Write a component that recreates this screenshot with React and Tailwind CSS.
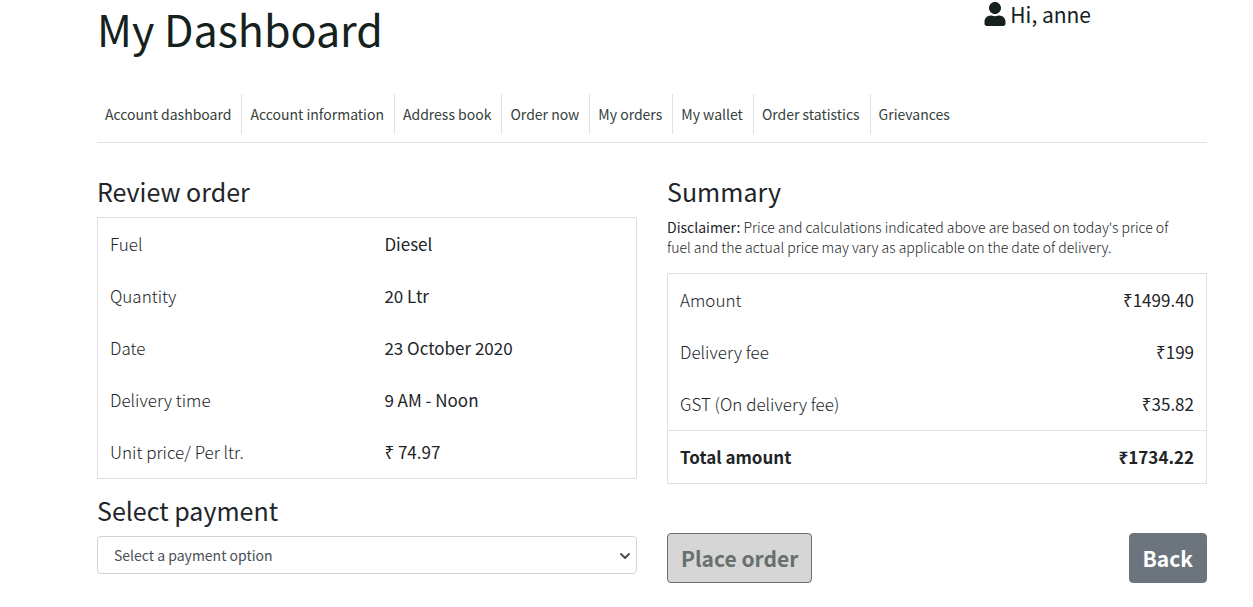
import { useState } from "react";
import { ChevronDown } from "lucide-react";
import { FaUser } from "react-icons/fa";

const navItems = [
  "Account dashboard",
  "Account information",
  "Address book",
  "Order now",
  "My orders",
  "My wallet",
  "Order statistics",
  "Grievances",
];

const orderRows = [
  { label: "Fuel", value: "Diesel" },
  { label: "Quantity", value: "20 Ltr" },
  { label: "Date", value: "23 October 2020" },
  { label: "Delivery time", value: "9 AM - Noon" },
  { label: "Unit price/ Per ltr.", value: "₹ 74.97" },
];

const summaryRows = [
  { label: "Amount", value: "₹1499.40" },
  { label: "Delivery fee", value: "₹199" },
  { label: "GST (On delivery fee)", value: "₹35.82" },
];

function Header() {
  return (
    <header className="flex items-start justify-between text-[#14211d]">
      <h1 className="text-[43px] leading-[56px]">My Dashboard</h1>
      <p className="mr-[116px] flex items-center gap-1 text-[21px] leading-7">
        <FaUser className="h-6 w-[22px]" />
        Hi, anne
      </p>
    </header>
  );
}

function AccountNav() {
  return (
    <nav className="mt-[38px] border-b border-[#e2e3e3] pb-2">
      <ul className="flex flex-wrap">
        {navItems.map((item) => (
          <li key={item} className="border-r border-[#e0e0e0] last:border-r-0">
            <a
              href="#"
              className="block pr-2.5 pl-2 text-sm leading-10 text-[#35413d]"
            >
              {item}
            </a>
          </li>
        ))}
      </ul>
    </nav>
  );
}

function ReviewOrder() {
  const [payment, setPayment] = useState("");

  return (
    <section>
      <h2 className="text-[25px] leading-7">Review order</h2>
      <table className="mt-3 w-full table-fixed border border-[#e0e0e0] text-[17px] leading-7">
        <tbody>
          {orderRows.map((row) => (
            <tr key={row.label}>
              <th scope="row" className="w-[51%] p-3 text-left font-light">
                {row.label}
              </th>
              <td className="p-3">{row.value}</td>
            </tr>
          ))}
        </tbody>
      </table>

      <label
        htmlFor="payment"
        className="mt-[17px] block text-[25px] leading-7"
      >
        Select payment
      </label>
      <div className="relative mt-3">
        <select
          id="payment"
          value={payment}
          onChange={(e) => setPayment(e.target.value)}
          className="h-[38px] w-full appearance-none rounded border border-[#ced4da] bg-white px-4 text-sm text-[#495057]"
        >
          <option value="">Select a payment option</option>
          <option value="wallet">My wallet</option>
          <option value="cash">Cash on delivery</option>
        </select>
        <ChevronDown
          className="pointer-events-none absolute top-3 right-1 h-4 w-4 text-[#495057]"
          strokeWidth={3}
        />
      </div>
    </section>
  );
}

function Summary() {
  return (
    <section>
      <h2 className="text-[25px] leading-7">Summary</h2>
      <p className="mt-3 pr-5 text-sm leading-5 font-light">
        <span className="font-normal">Disclaimer:</span> Price and calculations
        indicated above are based on today's price of fuel and the actual price
        may vary as applicable on the date of delivery.
      </p>
      <table className="mt-4 w-full border border-[#e0e0e0] text-[17px] leading-7">
        <tbody>
          {summaryRows.map((row) => (
            <tr key={row.label}>
              <th scope="row" className="p-3 text-left font-light">
                {row.label}
              </th>
              <td className="p-3 text-right">{row.value}</td>
            </tr>
          ))}
        </tbody>
        <tfoot>
          <tr className="border-t border-[#dee2e6] font-bold">
            <th scope="row" className="p-3 text-left">
              Total amount
            </th>
            <td className="p-3 text-right">₹1734.22</td>
          </tr>
        </tfoot>
      </table>

      <div className="mt-[49px] flex justify-between text-[21px] leading-6 font-bold">
        <button
          type="button"
          disabled
          className="rounded border border-[#68706d] bg-[#d6d6d6] px-[13px] py-3 text-[#68706d]"
        >
          Place order
        </button>
        <button
          type="button"
          className="rounded border border-[#6c757d] bg-[#6c757d] px-[13px] py-3 text-white"
        >
          Back
        </button>
      </div>
    </section>
  );
}

export default function App() {
  return (
    <main className="bg-white pr-[46px] pb-6 pl-[97px] font-['Noto_Sans_CJK_SC','Noto_Sans',sans-serif] text-[#212529]">
      <Header />
      <AccountNav />
      <div className="mt-[34px] grid gap-[30px] md:grid-cols-2">
        <ReviewOrder />
        <Summary />
      </div>
    </main>
  );
}
